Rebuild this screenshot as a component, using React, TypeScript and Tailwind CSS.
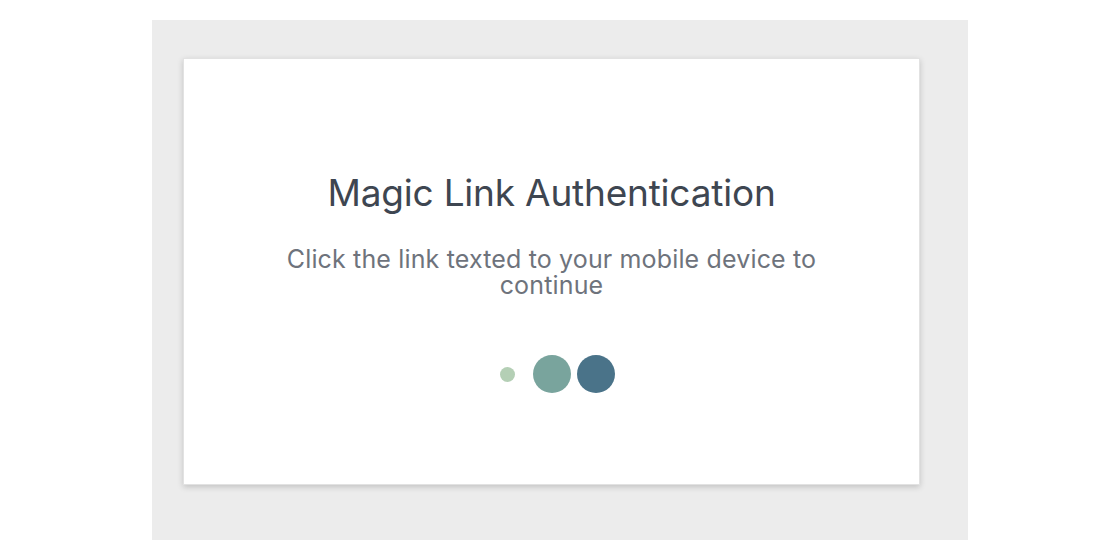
export default function App() {
  return (
    <div className="w-full h-[560px] bg-white flex justify-center pt-[20px]" style={{ fontFamily: 'Inter, "Noto Sans", sans-serif' }}>
      <div className="w-[816px] h-[520px] bg-[#ececec] pl-[31px] pt-[38px]">
        {/* card */}
        <div className="w-[737px] h-[427px] bg-white border border-[#e2e2e2] shadow-[0_2px_6px_rgba(0,0,0,0.18)] flex flex-col items-center pt-[112px]">
          <h1 className="text-[37px] leading-[44px] font-normal text-[#3e4651] tracking-[-0.2px]">
            Magic Link Authentication
          </h1>
          <p className="mt-[31px] w-[570px] text-center text-[25px] leading-[26px] tracking-[0.15px] text-[#6e737c]">
            Click the link texted to your mobile device to continue
          </p>
          <div className="mt-[57px] flex items-center gap-[6px]">
            <div className="w-[38px] h-[38px] flex items-center justify-center">
              <div className="w-[15px] h-[15px] rounded-full bg-[#b4cfb5]" />
            </div>
            <div className="w-[38px] h-[38px] rounded-full bg-[#79a49d]" />
            <div className="w-[38px] h-[38px] rounded-full bg-[#4a7389]" />
          </div>
        </div>
      </div>
    </div>
  );
}
